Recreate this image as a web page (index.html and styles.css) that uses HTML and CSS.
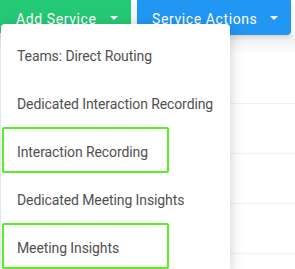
FILE: index.html
```html
<!DOCTYPE html>
<html>
<head>
<meta charset="utf-8">
<link rel="stylesheet" href="styles.css">
</head>
<body>
<div class="page">
  <div class="toolbar">
    <button class="btn btn-green">Add Service<span class="caret"></span></button>
    <button class="btn btn-blue">Service Actions<span class="caret"></span></button>
  </div>
  <div class="table">
    <div class="table-head"></div>
    <div class="row"></div>
    <div class="row"></div>
    <div class="row"></div>
    <div class="row"></div>
  </div>
  <ul class="menu">
    <li class="item">Teams: Direct Routing</li>
    <li class="item">Dedicated Interaction Recording</li>
    <li class="item item-marked">Interaction Recording</li>
    <li class="item">Dedicated Meeting Insights</li>
    <li class="item item-marked">Meeting Insights</li>
  </ul>
</div>
</body>
</html>
```
FILE: styles.css
```css
html, body {
  margin: 0;
  padding: 0;
  background: #ffffff;
}
body {
  font-family: Roboto, "Liberation Sans", sans-serif;
  width: 295px;
  height: 269px;
  overflow: hidden;
}
.page {
  position: relative;
  width: 295px;
  height: 269px;
}
.toolbar {
  display: flex;
  gap: 6px;
  height: 35px;
}
.btn {
  display: flex;
  align-items: center;
  height: 35px;
  border: none;
  border-radius: 0 0 4px 4px;
  color: #ffffff;
  font-family: Roboto, "Liberation Sans", sans-serif;
  font-size: 14px;
  letter-spacing: 0.6px;
  padding: 2px 13px 0 16px;
  box-shadow: 0 2px 5px rgba(0, 0, 0, 0.12);
}
.btn-green {
  background: #25c874;
  width: 131px;
}
.btn-blue {
  background: #2196f3;
  width: 154px;
  padding-left: 15px;
}
.caret {
  margin-left: auto;
  width: 0;
  height: 0;
  border-left: 4px solid transparent;
  border-right: 4px solid transparent;
  border-top: 4px solid #ffffff;
  margin-top: -2px;
}
.table-head {
  height: 19px;
  background: linear-gradient(#ededed, #ffffff);
}
.row {
  height: 49px;
  border-bottom: 1px solid #f1f1f1;
}
.menu {
  position: absolute;
  left: 1px;
  top: 24px;
  width: 229px;
  margin: 0;
  padding: 8px 0 0;
  list-style: none;
  background: #ffffff;
  border-radius: 4px 4px 0 0;
  box-shadow: 0 3px 14px rgba(0, 0, 0, 0.2);
}
.item {
  position: relative;
  height: 48px;
  display: flex;
  align-items: center;
  padding-left: 16px;
  font-size: 14px;
  letter-spacing: -0.1px;
  color: #505050;
}
.item-marked::after {
  content: "";
  position: absolute;
  left: 1px;
  top: -1px;
  width: 167px;
  height: 46px;
  box-sizing: border-box;
  border: 2px solid #58ee24;
  border-radius: 2px;
}
```
